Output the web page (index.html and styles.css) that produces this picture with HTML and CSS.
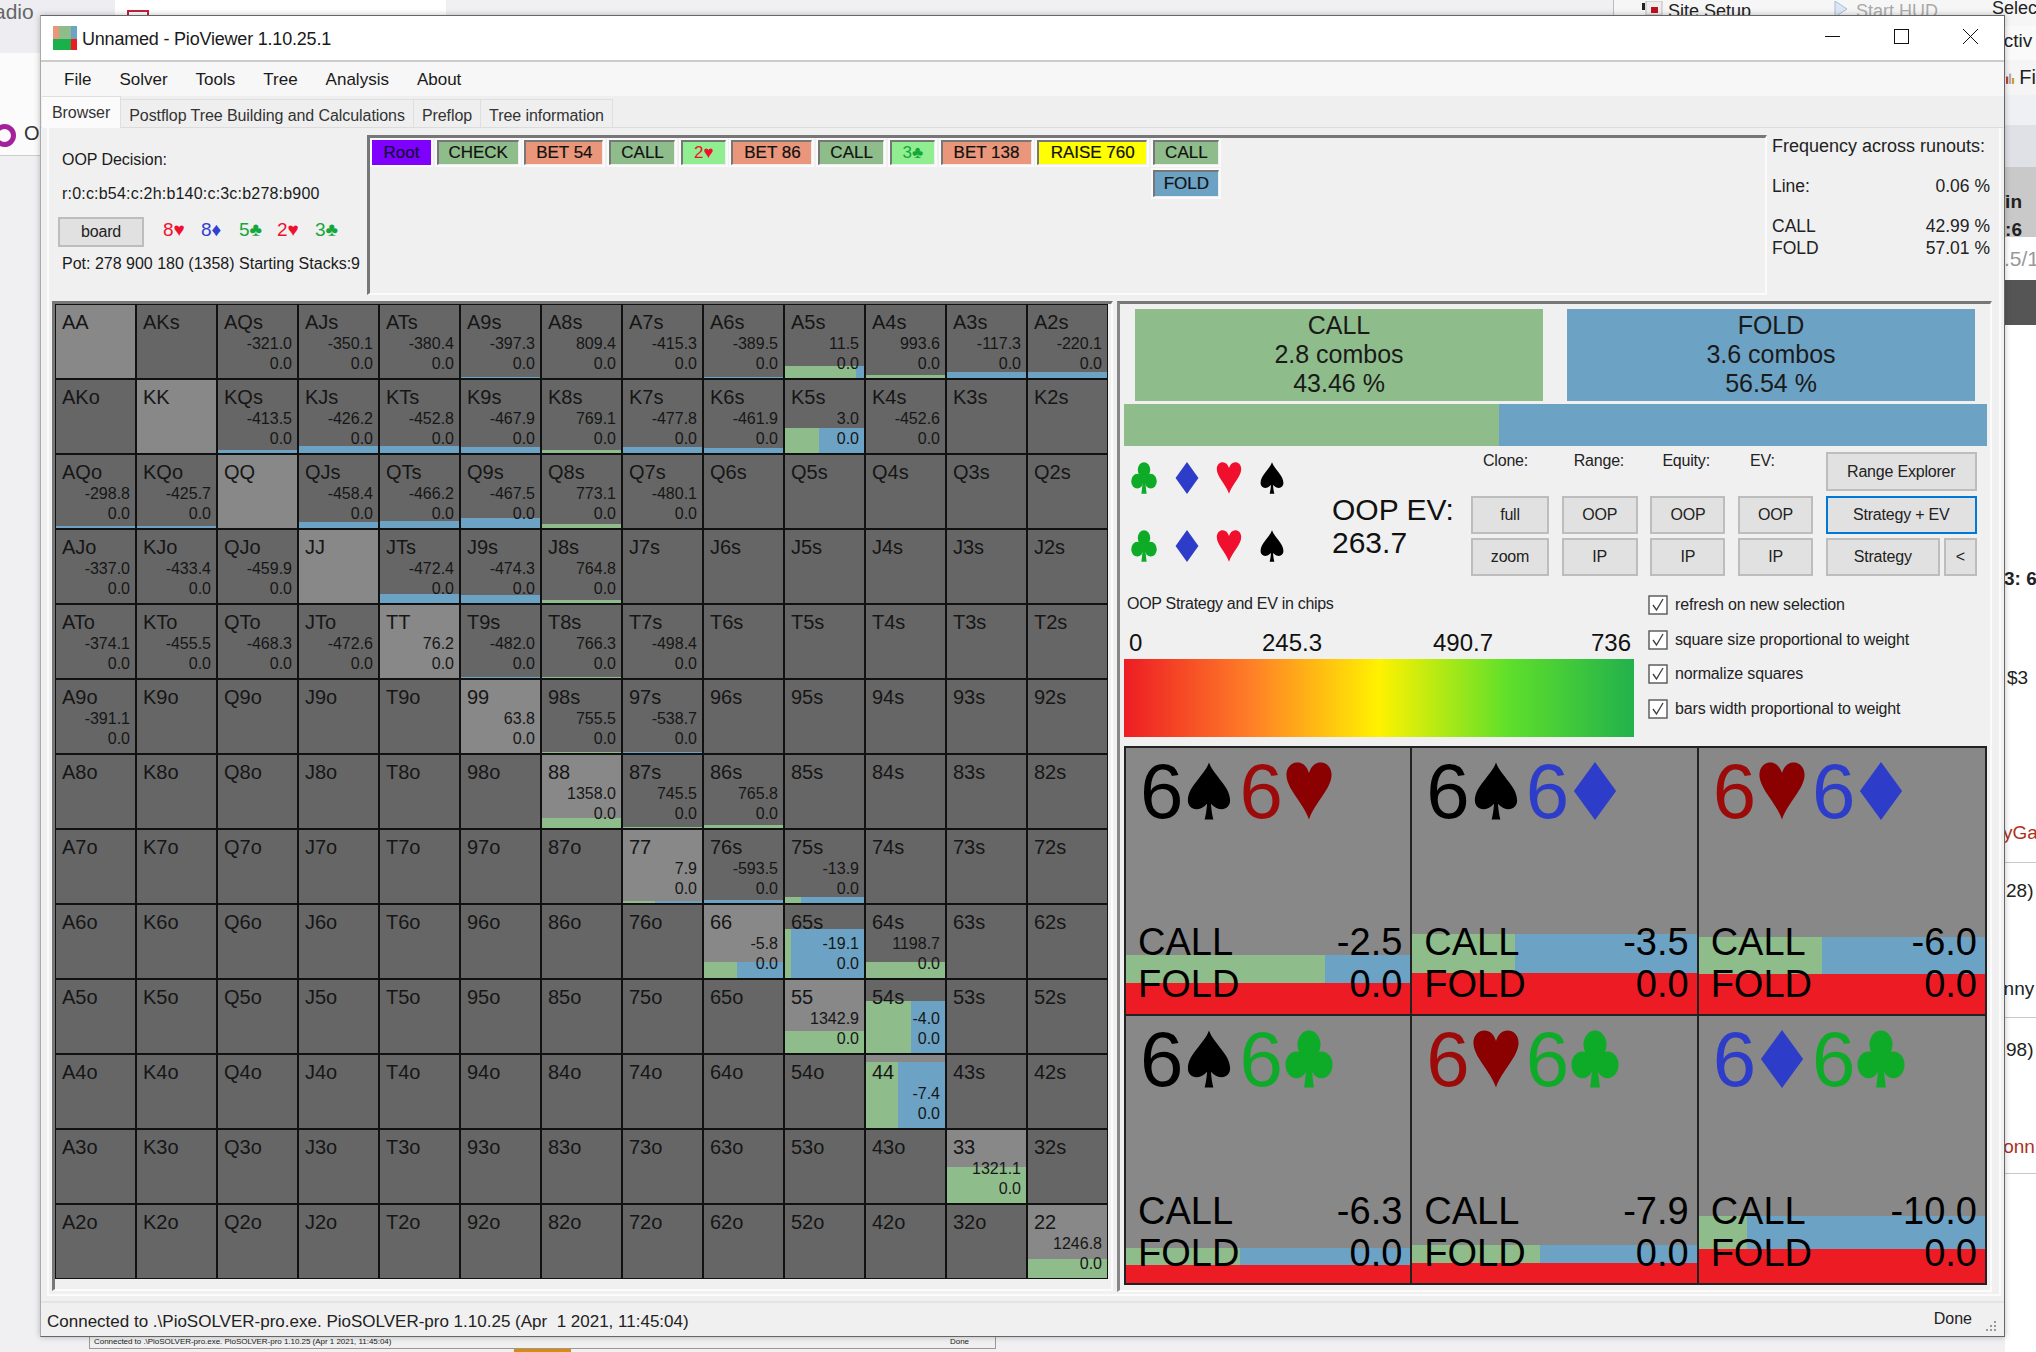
FILE: index.html

```html
<!DOCTYPE html>
<html lang="en">
<head>
  <meta charset="UTF-8" />
  <title>Unnamed - PioViewer 1.10.25.1</title>
  <link rel="stylesheet" href="styles.css">
</head>
<body>
  <svg class="defs" width="0" height="0">
    <symbol id="spade" viewBox="0 0 100 100" preserveAspectRatio="none"><path d="M50 1C60 24 94 42 94 66C94 82 72 88 54 72C55 84 57 92 59 99L41 99C43 92 45 84 46 72C28 88 6 82 6 66C6 42 40 24 50 1Z"/></symbol>
    <symbol id="heart" viewBox="0 0 100 100" preserveAspectRatio="none"><path d="M50 99C38 70 3 46 3 22C3 9 14 1 26 1C37 1 46 8 50 19C54 8 63 1 74 1C86 1 97 9 97 22C97 46 62 70 50 99Z"/></symbol>
    <symbol id="diamond" viewBox="0 0 100 100" preserveAspectRatio="none"><path d="M50 0L94 50L50 100L6 50Z"/></symbol>
    <symbol id="club" viewBox="0 0 100 100" preserveAspectRatio="none"><circle cx="50" cy="25" r="24"/><circle cx="24" cy="60" r="23"/><circle cx="76" cy="60" r="23"/><path d="M42 40L58 40L56 70L60 99L40 99L44 70Z"/></symbol>
  </svg>

  <!-- what shows around the window -->
  <div class="bg bg-left-top"><span class="bg-radio">adio</span></div>
  <div class="bg bg-left-mid"><span class="ring"></span><span class="bg-o">O</span></div>
  <div class="bg bg-top-box"><span class="bg-top-icon"></span></div>
  <div class="bg bg-right-bar">
    <svg class="bg-site-icon" viewBox="0 0 24 14" width="24" height="14"><rect x="6" width="16" height="14" fill="#eee" stroke="#bbb"/><rect x="11" y="6" width="7" height="6" fill="#c01020"/><rect x="2" y="2" width="3" height="7" fill="#222"/></svg>
    <span class="bg-site">Site Setup</span>
    <svg class="bg-hud-icon" viewBox="0 0 14 16" width="14" height="16"><path d="M1 0L13 8L1 16Z" fill="#dce6f4" stroke="#a8bcd8"/></svg>
    <span class="bg-hud">Start HUD</span>
    <span class="bg-select">Select</span>
  </div>
  <div class="bg bg-right-col">
    <div class="rc-activ">Activ</div>
    <div class="rc-fi">
      <svg viewBox="0 0 14 16" width="14" height="16"><rect x="0" y="6" width="3" height="10" fill="#c04040"/><rect x="4" y="2" width="3" height="14" fill="#b0b0b0"/><rect x="8" y="8" width="3" height="8" fill="#c0a040"/></svg>
      <span>Fi</span>
    </div>
    <div class="rc-plain"></div>
    <div class="rc-win"><b>Win</b><b>:6</b></div>
    <div class="rc-input">.5/1</div>
    <div class="rc-dark"></div>
    <div class="rc-list">
      <b class="rc-t1">3: 6</b>
      <span class="rc-t2">$3</span>
      <span class="rc-t3">yGa</span>
      <span class="rc-t4">28)</span>
      <span class="rc-t5">onny</span>
      <span class="rc-t6">98)</span>
      <span class="rc-t7">lonn</span>
      <i class="rc-line rc-l1"></i>
      <i class="rc-line rc-l2"></i>
      <i class="rc-line rc-l3"></i>
    </div>
  </div>
  <div class="bg bg-under">
    <span>Connected to .\PioSOLVER-pro.exe. PioSOLVER-pro 1.10.25 (Apr 1 2021, 11:45:04)</span>
    <span>Done</span>
  </div>
  <div class="bg bg-orange"></div>

  <div class="window">
    <div class="titlebar">
      <svg class="app-icon" viewBox="0 0 24 24" width="24" height="24">
        <rect width="6" height="13" fill="#e9967a"/>
        <rect x="6" width="12" height="13" fill="#8fbc8b"/>
        <rect x="18" width="6" height="13" fill="#6ca2c4"/>
        <rect y="13" width="18" height="11" fill="#1ab04c"/>
        <rect x="18" y="13" width="6" height="11" fill="#ed1c24"/>
      </svg>
      <span class="title-text">Unnamed - PioViewer 1.10.25.1</span>
      <div class="win-btns">
        <svg viewBox="0 0 15 15" width="15" height="15"><path d="M0 7.5H15" stroke="#111" fill="none"/></svg>
        <svg viewBox="0 0 15 15" width="15" height="15"><rect x=".5" y=".5" width="14" height="14" stroke="#111" fill="none"/></svg>
        <svg viewBox="0 0 15 15" width="15" height="15"><path d="M0 0L15 15M15 0L0 15" stroke="#111" fill="none"/></svg>
      </div>
    </div>

    <div class="menubar">
      <span>File</span><span>Solver</span><span>Tools</span><span>Tree</span><span>Analysis</span><span>About</span>
    </div>

    <div class="tabs">
      <div class="tab active">Browser</div>
      <div class="tab">Postflop Tree Building and Calculations</div>
      <div class="tab">Preflop</div>
      <div class="tab">Tree information</div>
    </div>

    <div class="tabpane">
      <div class="top-row">
        <div class="info">
          <div class="info-line">OOP Decision:</div>
          <div class="info-line path">r:0:c:b54:c:2h:b140:c:3c:b278:b900</div>
          <div class="board-row">
            <button class="btn board-btn">board</button>
            <span class="card red">8♥</span>
            <span class="card blue">8♦</span>
            <span class="card green">5♣</span>
            <span class="card red">2♥</span>
            <span class="card green">3♣</span>
          </div>
          <div class="info-line pot">Pot: 278 900 180 (1358) Starting Stacks:9</div>
        </div>

        <div class="line-panel">
          <div class="step root">Root</div>
          <div class="step st-call w-check">CHECK</div>
          <div class="step st-bet w-bet54">BET 54</div>
          <div class="step st-call w-call">CALL</div>
          <div class="step st-street w-street red">2♥</div>
          <div class="step st-bet w-bet86">BET 86</div>
          <div class="step st-call w-call">CALL</div>
          <div class="step st-street w-street green">3♣</div>
          <div class="step st-bet w-bet138">BET 138</div>
          <div class="step st-raise">RAISE 760</div>
          <div class="step-col">
            <div class="step st-call w-call">CALL</div>
            <div class="step st-fold w-call">FOLD</div>
          </div>
        </div>

        <div class="freq">
          <div>Frequency across runouts:</div>
          <div class="freq-row gap"><span>Line:</span><span>0.06 %</span></div>
          <div class="freq-row gap"><span>CALL</span><span>42.99 %</span></div>
          <div class="freq-row"><span>FOLD</span><span>57.01 %</span></div>
        </div>
      </div>

      <div class="main-row">
        <div class="range-panel">
          <div class="range-grid" id="rangeGrid"></div>
        </div>

        <div class="side-panel">
          <div class="actions">
            <div class="action call-box">CALL<span>2.8 combos</span><span>43.46 %</span></div>
            <div class="action fold-box">FOLD<span>3.6 combos</span><span>56.54 %</span></div>
          </div>
          <div class="strategy-bar"><div class="strategy-call"></div></div>

          <div class="controls">
            <div class="suits">
              <div class="suit-row">
                <svg class="c-club"><use href="#club"/></svg>
                <svg class="c-diamond"><use href="#diamond"/></svg>
                <svg class="c-heart"><use href="#heart"/></svg>
                <svg class="c-spade"><use href="#spade"/></svg>
              </div>
              <div class="suit-row">
                <svg class="c-club"><use href="#club"/></svg>
                <svg class="c-diamond"><use href="#diamond"/></svg>
                <svg class="c-heart"><use href="#heart"/></svg>
                <svg class="c-spade"><use href="#spade"/></svg>
              </div>
            </div>
            <div class="oop-ev">OOP EV:<br>263.7</div>
            <div class="btn-grid">
              <div class="col-label">Clone:</div>
              <div class="col-label">Range:</div>
              <div class="col-label">Equity:</div>
              <div class="col-label">EV:</div>
              <button class="btn">Range Explorer</button>

              <button class="btn">full</button>
              <button class="btn">OOP</button>
              <button class="btn">OOP</button>
              <button class="btn">OOP</button>
              <button class="btn focus">Strategy + EV</button>

              <button class="btn">zoom</button>
              <button class="btn">IP</button>
              <button class="btn">IP</button>
              <button class="btn">IP</button>
              <div class="btn-pair">
                <button class="btn">Strategy</button>
                <button class="btn">&lt;</button>
              </div>
            </div>
          </div>

          <div class="legend-row">
            <div class="legend">
              <div class="legend-title">OOP Strategy and EV in chips</div>
              <div class="legend-scale"><span>0</span><span>245.3</span><span>490.7</span><span>736</span></div>
              <div class="gradient"></div>
            </div>
            <div class="checks">
              <div class="check-row"><svg class="tick" viewBox="0 0 20 20"><rect x="1" y="1" width="18" height="18" fill="#fff" stroke="#555" stroke-width="1.4"/><path d="M5 10L8.5 15L15 4" fill="none" stroke="#444" stroke-width="1.4"/></svg>refresh on new selection</div>
              <div class="check-row"><svg class="tick" viewBox="0 0 20 20"><rect x="1" y="1" width="18" height="18" fill="#fff" stroke="#555" stroke-width="1.4"/><path d="M5 10L8.5 15L15 4" fill="none" stroke="#444" stroke-width="1.4"/></svg>square size proportional to weight</div>
              <div class="check-row"><svg class="tick" viewBox="0 0 20 20"><rect x="1" y="1" width="18" height="18" fill="#fff" stroke="#555" stroke-width="1.4"/><path d="M5 10L8.5 15L15 4" fill="none" stroke="#444" stroke-width="1.4"/></svg>normalize squares</div>
              <div class="check-row"><svg class="tick" viewBox="0 0 20 20"><rect x="1" y="1" width="18" height="18" fill="#fff" stroke="#555" stroke-width="1.4"/><path d="M5 10L8.5 15L15 4" fill="none" stroke="#444" stroke-width="1.4"/></svg>bars width proportional to weight</div>
            </div>
          </div>

          <div class="hands">
            <div class="hand">
              <div class="hand-bar" style="bottom:31px;height:28px"><i style="width:70%"></i></div><div class="hand-red" style="height:31px"></div>
              <div class="hand-cards"><span class="c-spade">6</span><svg class="c-spade"><use href="#spade"/></svg><span class="c-heart-d">6</span><svg class="c-heart-d"><use href="#heart"/></svg></div>
              <div class="hand-stats"><div><span>CALL</span><span>-2.5</span></div><div><span>FOLD</span><span>0.0</span></div></div>
            </div>
            <div class="hand">
              <div class="hand-bar" style="bottom:41px;height:39px"><i style="width:36%"></i></div><div class="hand-red" style="height:41px"></div>
              <div class="hand-cards"><span class="c-spade">6</span><svg class="c-spade"><use href="#spade"/></svg><span class="c-diamond">6</span><svg class="c-diamond"><use href="#diamond"/></svg></div>
              <div class="hand-stats"><div><span>CALL</span><span>-3.5</span></div><div><span>FOLD</span><span>0.0</span></div></div>
            </div>
            <div class="hand">
              <div class="hand-bar" style="bottom:40px;height:37px"><i style="width:43%"></i></div><div class="hand-red" style="height:40px"></div>
              <div class="hand-cards"><span class="c-heart-d">6</span><svg class="c-heart-d"><use href="#heart"/></svg><span class="c-diamond">6</span><svg class="c-diamond"><use href="#diamond"/></svg></div>
              <div class="hand-stats"><div><span>CALL</span><span>-6.0</span></div><div><span>FOLD</span><span>0.0</span></div></div>
            </div>
            <div class="hand">
              <div class="hand-bar" style="bottom:18px;height:17px"><i style="width:40%"></i></div><div class="hand-red" style="height:18px"></div>
              <div class="hand-cards"><span class="c-spade">6</span><svg class="c-spade"><use href="#spade"/></svg><span class="c-club">6</span><svg class="c-club"><use href="#club"/></svg></div>
              <div class="hand-stats"><div><span>CALL</span><span>-6.3</span></div><div><span>FOLD</span><span>0.0</span></div></div>
            </div>
            <div class="hand">
              <div class="hand-bar" style="bottom:20px;height:18px"><i style="width:45%"></i></div><div class="hand-red" style="height:20px"></div>
              <div class="hand-cards"><span class="c-heart-d">6</span><svg class="c-heart-d"><use href="#heart"/></svg><span class="c-club">6</span><svg class="c-club"><use href="#club"/></svg></div>
              <div class="hand-stats"><div><span>CALL</span><span>-7.9</span></div><div><span>FOLD</span><span>0.0</span></div></div>
            </div>
            <div class="hand">
              <div class="hand-bar" style="bottom:34px;height:33px"><i style="width:17%"></i></div><div class="hand-red" style="height:34px"></div>
              <div class="hand-cards"><span class="c-diamond">6</span><svg class="c-diamond"><use href="#diamond"/></svg><span class="c-club">6</span><svg class="c-club"><use href="#club"/></svg></div>
              <div class="hand-stats"><div><span>CALL</span><span>-10.0</span></div><div><span>FOLD</span><span>0.0</span></div></div>
            </div>
          </div>
        </div>
      </div>
    </div>

    <div class="statusbar">
      <span>Connected to .\PioSOLVER-pro.exe. PioSOLVER-pro 1.10.25 (Apr&nbsp; 1 2021, 11:45:04)</span>
      <span class="status-done">Done</span>
      <svg class="grip" viewBox="0 0 12 12" width="12" height="12" fill="#999"><rect x="9" y="0" width="2" height="2"/><rect x="5" y="4" width="2" height="2"/><rect x="9" y="4" width="2" height="2"/><rect x="1" y="8" width="2" height="2"/><rect x="5" y="8" width="2" height="2"/><rect x="9" y="8" width="2" height="2"/></svg>
    </div>
  </div>

  <script src="script.js"></script>
</body>
</html>
```

FILE: styles.css

```css
html, body {
  margin: 0;
  padding: 0;
  height: 100%;
  overflow: hidden;
  background-color: #f0f0f2;
  font-family: "Liberation Sans", Arial, sans-serif;
  color: #1a1a1a;
}
.defs {
  position: absolute;
}

/* desktop pieces behind the window */
.bg {
  position: absolute;
  overflow: hidden;
}
.bg-left-top {
  left: 0;
  top: 0;
  width: 115px;
  height: 53px;
  background-color: #eeeef2;
}
.bg-radio {
  position: absolute;
  left: -6px;
  top: 0;
  font-size: 21px;
  color: #666;
}
.bg-left-mid {
  left: 0;
  top: 53px;
  width: 40px;
  height: 102px;
  background-color: #fbfbfb;
  border-bottom: 1px solid #ccc;
}
.ring {
  position: absolute;
  left: -7px;
  top: 71px;
  width: 13px;
  height: 13px;
  border: 5px solid #a5209b;
  border-radius: 50%;
}
.bg-o {
  position: absolute;
  left: 24px;
  top: 69px;
  font-size: 20px;
  color: #333;
}
.bg-top-box {
  left: 115px;
  top: 0;
  width: 331px;
  height: 16px;
  background-color: #fff;
}
.bg-top-icon {
  position: absolute;
  left: 12px;
  top: 10px;
  width: 22px;
  height: 8px;
  border: 2px solid #c02040;
  box-sizing: border-box;
}
.bg-right-bar {
  left: 1613px;
  top: 0;
  width: 423px;
  height: 26px;
  background-color: #f6f6f6;
  border-left: 1px solid #bbb;
  font-size: 18px;
}
.bg-site-icon {
  position: absolute;
  left: 26px;
  top: 1px;
}
.bg-site {
  position: absolute;
  left: 54px;
  top: 1px;
  color: #222;
}
.bg-hud-icon {
  position: absolute;
  left: 220px;
  top: 1px;
}
.bg-hud {
  position: absolute;
  left: 242px;
  top: 1px;
  color: #aaa;
}
.bg-select {
  position: absolute;
  left: 378px;
  top: -2px;
  color: #222;
}
.bg-right-col {
  left: 2005px;
  top: 26px;
  width: 31px;
  height: 1326px;
  background-color: #fff;
  font-size: 19px;
  color: #222;
}
.rc-activ {
  height: 34px;
  line-height: 30px;
  margin-left: -14px;
  background-color: #fafafa;
}
.rc-fi {
  height: 35px;
  background-color: #f5f5f5;
  display: flex;
  align-items: center;
  gap: 3px;
  padding-left: 1px;
  font-size: 20px;
}
.rc-plain {
  height: 30px;
  background-color: #eff0f3;
}
.rc-win {
  height: 112px;
  padding: 66px 14px 0 0;
  box-sizing: border-box;
  background: linear-gradient(to bottom, #dfe1e6 0, #dfe1e6 42px, #c9c9c9 42px, #c9c9c9 100%);
  display: flex;
  flex-direction: column;
  align-items: flex-end;
  gap: 6px;
  line-height: 22px;
}
.rc-input {
  height: 43px;
  line-height: 44px;
  margin-left: -1px;
  color: #999;
  font-size: 21px;
  white-space: nowrap;
}
.rc-dark {
  height: 45px;
  background-color: #555;
}
.rc-list {
  position: relative;
}
.rc-list > * {
  position: absolute;
  white-space: nowrap;
}
.rc-t1 { left: -1px; top: 243px; }
.rc-t2 { left: 2px; top: 342px; }
.rc-t3 { left: -2px; top: 497px; color: #b03020; }
.rc-t4 { left: 1px; top: 555px; }
.rc-t5 { left: -12px; top: 653px; }
.rc-t6 { left: 1px; top: 714px; }
.rc-t7 { left: -6px; top: 811px; color: #b03020; }
.rc-line {
  left: 0;
  width: 31px;
  height: 1px;
  background-color: #c8c8c8;
}
.rc-l1 { top: 537px; }
.rc-l2 { top: 692px; }
.rc-l3 { top: 848px; }
.bg-under {
  left: 89px;
  top: 1337px;
  width: 907px;
  height: 12px;
  padding: 0 26px 0 4px;
  box-sizing: border-box;
  background-color: #f0f0f0;
  border: 1px solid #999;
  border-top: none;
  font-size: 8px;
  line-height: 10px;
  letter-spacing: -0.03px;
  display: flex;
  justify-content: space-between;
}
.bg-orange {
  left: 514px;
  top: 1349px;
  width: 57px;
  height: 3px;
  background-color: #d98a10;
}

/* the application window */
.window {
  position: absolute;
  left: 40px;
  top: 15px;
  width: 1965px;
  height: 1322px;
  box-sizing: border-box;
  border: 1px solid #666;
  border-left-color: #aaa;
  background-color: #f0f0f0;
  display: flex;
  flex-direction: column;
  box-shadow: 0 0 6px rgba(0, 0, 0, 0.25);
}
.titlebar {
  height: 46px;
  flex: none;
  box-sizing: border-box;
  border-bottom: 2px solid #ccc;
  background-color: #fff;
  display: flex;
  align-items: center;
  padding-left: 12px;
}
.app-icon {
  margin-right: 5px;
}
.title-text {
  font-size: 18px;
  letter-spacing: -0.2px;
  padding-top: 2px;
}
.win-btns {
  margin-left: auto;
  display: flex;
  gap: 54px;
  padding-right: 26px;
  margin-top: -3px;
}
.menubar {
  height: 34px;
  flex: none;
  background-color: #f7f7f7;
  display: flex;
  align-items: center;
  gap: 28px;
  padding: 2px 0 0 23px;
  box-sizing: border-box;
  font-size: 17px;
}
.tabs {
  height: 32px;
  flex: none;
  display: flex;
  align-items: flex-end;
  padding-left: 1px;
  background-color: #efefef;
  border-bottom: 1px solid #dcdcdc;
  box-sizing: border-box;
}
.tab {
  height: 28px;
  line-height: 27px;
  padding: 2px 8px 0;
  box-sizing: border-box;
  border: 1px solid #dfdfdf;
  border-bottom: none;
  border-left: none;
  font-size: 16px;
  letter-spacing: -0.07px;
  color: #333;
}
.tab.active {
  height: 32px;
  line-height: 26px;
  padding: 3px 10px 0;
  background-color: #fbfbfb;
  margin-bottom: -1px;
  position: relative;
}
.tabpane {
  flex: 1;
  margin: 0 3px 5px 6px;
  display: flex;
  flex-direction: column;
  border-left: 2px solid #fbfbfb;
  border-right: 2px solid #fbfbfb;
  border-bottom: 2px solid #fbfbfb;
}

.top-row {
  height: 173px;
  flex: none;
  display: flex;
  box-sizing: border-box;
  padding: 7px 0 6px;
}
.info {
  width: 318px;
  flex: none;
  padding: 15px 0 0 13px;
  box-sizing: border-box;
  font-size: 16px;
  letter-spacing: -0.05px;
}
.info-line {
  line-height: 20px;
  white-space: nowrap;
}
.path {
  margin-top: 14px;
  letter-spacing: 0.2px;
}
.board-row {
  margin-top: 13px;
  display: flex;
  align-items: center;
  height: 30px;
}
.board-btn {
  width: 86px;
  height: 30px;
  margin: 0 19px 0 -4px;
}
.card {
  width: 38px;
  font-size: 19px;
  margin-top: -5px;
}
.pot {
  margin-top: 7px;
  font-size: 16px;
  letter-spacing: 0;
}
.red { color: #f0102e; }
.blue { color: #3040d0; }
.green { color: #12a83a; }

.line-panel {
  width: 1400px;
  flex: none;
  box-sizing: border-box;
  border-top: 3px solid #777;
  border-left: 3px solid #777;
  border-bottom: 2px solid #fbfbfb;
  border-right: 2px solid #fbfbfb;
  padding: 2px 0 0 2px;
  display: flex;
  align-items: flex-start;
  gap: 5.7px;
}
.step-col {
  display: flex;
  flex-direction: column;
  gap: 5px;
}
.step {
  height: 25px;
  box-sizing: border-box;
  border: 1px solid #eee;
  border-top: 2px solid #777;
  border-left: 2px solid #777;
  outline: 2px solid #fafafa;
  font-size: 17px;
  line-height: 22px;
  text-align: center;
  color: #111;
  -webkit-text-stroke: 0.2px #111;
  flex: none;
}
.root {
  width: 59px;
  background-color: #7f00ff;
  color: #12103c;
  border: none;
  line-height: 25px;
}
.st-call { background-color: #8fbc8b; }
.st-bet { background-color: #e9967a; }
.st-raise {
  width: 110px;
  background-color: #ffff00;
}
.st-fold {
  background-color: #6ca2c4;
  height: 27px;
  line-height: 24px;
}
.st-street {
  background-color: #90ee90;
  -webkit-text-stroke: 0;
}
.st-street.red { color: #f0102e; }
.st-street.green { color: #12a83a; }
.w-check { width: 82px; }
.w-bet54 { width: 79px; }
.w-call { width: 66px; }
.w-street { width: 45px; }
.w-bet86 { width: 81px; }
.w-bet138 { width: 91px; }

.freq {
  flex: 1;
  padding: 0 9px 0 5px;
  font-size: 18px;
  line-height: 22px;
  white-space: nowrap;
  color: #222;
}
.freq-row {
  display: flex;
  justify-content: space-between;
  font-size: 17.5px;
}
.freq-row.gap {
  margin-top: 18px;
}

.main-row {
  flex: 1;
  display: flex;
  gap: 4px;
  padding-left: 3px;
}
.range-panel {
  width: 1061px;
  height: 990px;
  flex: none;
  box-sizing: border-box;
  border-top: 3px solid #777;
  border-left: 3px solid #777;
  border-right: 2px solid #fbfbfb;
  border-bottom: 2px solid #fbfbfb;
}
.range-grid {
  display: grid;
  grid-template-columns: repeat(13, 81px);
  grid-auto-rows: 75px;
}
.cell {
  position: relative;
  box-sizing: border-box;
  border: 1px solid #111;
  background-color: #666;
  overflow: hidden;
  color: #161616;
}
.cell.pair {
  background-color: #888;
}
.cell-label {
  position: relative;
  font-size: 20px;
  line-height: 24px;
  padding: 5px 0 0 6px;
}
.cell-val {
  position: relative;
  font-size: 16px;
  line-height: 20px;
  text-align: right;
  padding-right: 5px;
}
.cell-bar {
  position: absolute;
  left: 0;
  right: 0;
  bottom: 0;
  background-color: #6ca2c4;
}
.cell-bar i {
  display: block;
  height: 100%;
  background-color: #8fbc8b;
}

.side-panel {
  width: 875px;
  height: 991px;
  flex: none;
  box-sizing: border-box;
  border-top: 3px solid #777;
  border-left: 3px solid #888;
  border-right: 2px solid #fbfbfb;
  border-bottom: 2px solid #fbfbfb;
}
.actions {
  display: flex;
  gap: 24px;
  margin: 5px 0 0 15px;
}
.action {
  width: 408px;
  height: 92px;
  display: flex;
  flex-direction: column;
  align-items: center;
  font-size: 25px;
  line-height: 29px;
  padding-top: 2px;
  box-sizing: border-box;
  color: #1a1a1a;
}
.call-box { background-color: #8fbc8b; }
.fold-box { background-color: #6ca2c4; }
.strategy-bar {
  width: 863px;
  height: 42px;
  margin: 3px 0 0 4px;
  background-color: #6ca2c4;
}
.strategy-call {
  width: 375px;
  height: 100%;
  background-color: #8fbc8b;
}

.controls {
  height: 144px;
  display: flex;
}
.suits {
  width: 212px;
  flex: none;
  padding: 16px 0 0 11px;
  box-sizing: border-box;
  display: flex;
  flex-direction: column;
  gap: 36px;
}
.suit-row {
  display: flex;
  gap: 16.5px;
}
.suit-row svg {
  width: 26px;
  height: 32px;
}
.c-club { color: #0dab27; fill: #0dab27; }
.c-diamond { color: #2d3cc9; fill: #2d3cc9; }
.c-heart { color: #f0102e; fill: #f0102e; }
.c-heart-d { color: #9c0a0a; fill: #8b0000; }
.c-spade { color: #000; fill: #000; }
.oop-ev {
  width: 139px;
  flex: none;
  padding-top: 47px;
  box-sizing: border-box;
  font-size: 30px;
  line-height: 33px;
  color: #111;
  white-space: nowrap;
}
.btn-grid {
  display: grid;
  grid-template-columns: 78px 76px 75px 75px 151px;
  grid-template-rows: 39px 38px 38px;
  column-gap: 12.7px;
  row-gap: 4.5px;
  margin-top: 6px;
}
.col-label {
  font-size: 16px;
  line-height: 18px;
  padding-left: 12px;
  color: #222;
  letter-spacing: -0.2px;
}
.btn {
  box-sizing: border-box;
  border: 2px solid #bdbdbd;
  background-color: #e1e1e1;
  font-family: "Liberation Sans", Arial, sans-serif;
  font-size: 16px;
  letter-spacing: -0.2px;
  color: #222;
  padding: 0;
}
.btn.focus {
  border-color: #0078d7;
}
.btn-pair {
  display: flex;
  gap: 4px;
}
.btn-pair .btn:first-child {
  width: 114px;
}
.btn-pair .btn:last-child {
  flex: 1;
}

.legend-row {
  height: 156px;
  display: flex;
}
.legend {
  width: 510px;
  margin-left: 4px;
  flex: none;
  padding-top: 4px;
  box-sizing: border-box;
}
.legend-title {
  font-size: 16px;
  line-height: 20px;
  padding-left: 3px;
  letter-spacing: -0.3px;
  color: #222;
}
.legend-scale {
  margin-top: 15px;
  height: 28px;
  display: grid;
  grid-template-columns: 133px 171px 1fr auto;
  padding: 0 3px 0 5px;
  font-size: 24px;
  line-height: 28px;
  color: #111;
}
.gradient {
  margin-top: 2px;
  height: 78px;
  background: linear-gradient(to right, #ed1c24 0%, #ff7f27 25%, #fff200 50%, #60e02a 75%, #22b14c 100%);
}
.checks {
  margin-left: 14px;
  padding-top: 5px;
  display: flex;
  flex-direction: column;
  gap: 14.7px;
}
.check-row {
  display: flex;
  align-items: center;
  gap: 7px;
  height: 20px;
  font-size: 16px;
  letter-spacing: -0.15px;
  color: #222;
}
.tick {
  width: 20px;
  height: 20px;
}

.hands {
  width: 863px;
  height: 539px;
  margin-left: 4px;
  box-sizing: border-box;
  border: 2px solid #222;
  display: grid;
  grid-template-columns: repeat(3, 1fr);
  grid-template-rows: 1fr 1fr;
  background-color: #888;
}
.hand {
  position: relative;
  border-right: 2px solid #222;
  border-bottom: 2px solid #222;
  display: flex;
  flex-direction: column;
  justify-content: space-between;
  padding: 4px 0 9px 12px;
  overflow: hidden;
}
.hand:nth-child(3n) {
  border-right: none;
}
.hand:nth-child(n+4) {
  border-bottom: none;
}
.hand-red {
  position: absolute;
  left: 0;
  right: 0;
  bottom: 0;
  background-color: #ed1c24;
}
.hand-bar {
  position: absolute;
  left: 0;
  right: 0;
  background-color: #6ca2c4;
}
.hand-bar i {
  display: block;
  height: 100%;
  background-color: #8fbc8b;
}
.hand-cards {
  display: flex;
  align-items: center;
  font-size: 78px;
  line-height: 78px;
  padding-left: 2px;
}
.hand-cards svg {
  width: 48px;
  height: 58px;
  margin: 0 6px 0 2px;
}
.hand-stats {
  position: relative;
  font-size: 38px;
  line-height: 42px;
  padding-right: 8px;
  color: #000;
}
.hand-stats > div {
  display: flex;
  justify-content: space-between;
}

.statusbar {
  height: 35px;
  flex: none;
  display: flex;
  align-items: center;
  padding: 4px 7px 0 6px;
  font-size: 17px;
  color: #222;
  border-top: 2px solid #e4e4e4;
  box-sizing: border-box;
}
.status-done {
  margin-left: auto;
  margin-right: 13px;
  font-size: 16px;
  margin-top: -6px;
}
.grip {
  margin-top: 10px;
}
```

FILE: script.js

```js
// EV text, bar height in px, green share of the bar in %
var cells = {
  AQs: ["-321.0"], AJs: ["-350.1"], ATs: ["-380.4"], A9s: ["-397.3", 1, 0], A8s: ["809.4"],
  A7s: ["-415.3"], A6s: ["-389.5", 1, 0], A5s: ["11.5", 12, 90], A4s: ["993.6", 3, 100],
  A3s: ["-117.3", 6, 0], A2s: ["-220.1", 6, 0],
  KQs: ["-413.5", 3, 0], KJs: ["-426.2", 7, 0], KTs: ["-452.8", 7, 0], K9s: ["-467.9", 6, 0],
  K8s: ["769.1", 3, 100], K7s: ["-477.8", 6, 0], K6s: ["-461.9", 5, 0], K5s: ["3.0", 25, 43],
  K4s: ["-452.6"],
  AQo: ["-298.8", 2, 0], KQo: ["-425.7", 2, 0], QJs: ["-458.4", 6, 0], QTs: ["-466.2", 7, 0],
  Q9s: ["-467.5", 10, 0], Q8s: ["773.1", 4, 100], Q7s: ["-480.1"],
  AJo: ["-337.0"], KJo: ["-433.4"], QJo: ["-459.9"], JTs: ["-472.4", 9, 0], J9s: ["-474.3", 8, 0],
  J8s: ["764.8", 3, 100],
  ATo: ["-374.1"], KTo: ["-455.5"], QTo: ["-468.3"], JTo: ["-472.6"], TT: ["76.2"],
  T9s: ["-482.0", 1, 0], T8s: ["766.3", 1, 100], T7s: ["-498.4"],
  A9o: ["-391.1"], "99": ["63.8"], "98s": ["755.5", 1, 100], "97s": ["-538.7", 1, 0],
  "88": ["1358.0", 10, 100], "87s": ["745.5", 1, 100], "86s": ["765.8", 3, 100],
  "77": ["7.9", 2, 40], "76s": ["-593.5", 3, 0], "75s": ["-13.9", 6, 20],
  "66": ["-5.8", 16, 42], "65s": ["-19.1", 49, 7], "64s": ["1198.7", 16, 100],
  "55": ["1342.9", 22, 100], "54s": ["-4.0", 52, 57],
  "44": ["-7.4", 66, 41],
  "33": ["1321.1", 36, 100],
  "22": ["1246.8", 19, 100]
};

var ranks = "AKQJT98765432";
var grid = document.getElementById("rangeGrid");
var html = "";

for (var i = 0; i < 13; i++) {
  for (var j = 0; j < 13; j++) {
    var name;
    if (i === j) name = ranks[i] + ranks[j];
    else if (i < j) name = ranks[i] + ranks[j] + "s";
    else name = ranks[j] + ranks[i] + "o";

    var c = cells[name];
    html += '<div class="cell' + (i === j ? " pair" : "") + '">';
    if (c && c[1]) {
      html += '<div class="cell-bar" style="height:' + c[1] + 'px"><i style="width:' + c[2] + '%"></i></div>';
    }
    html += '<div class="cell-label">' + name + "</div>";
    if (c) {
      html += '<div class="cell-val">' + c[0] + '</div><div class="cell-val">0.0</div>';
    }
    html += "</div>";
  }
}
grid.innerHTML = html;
```
